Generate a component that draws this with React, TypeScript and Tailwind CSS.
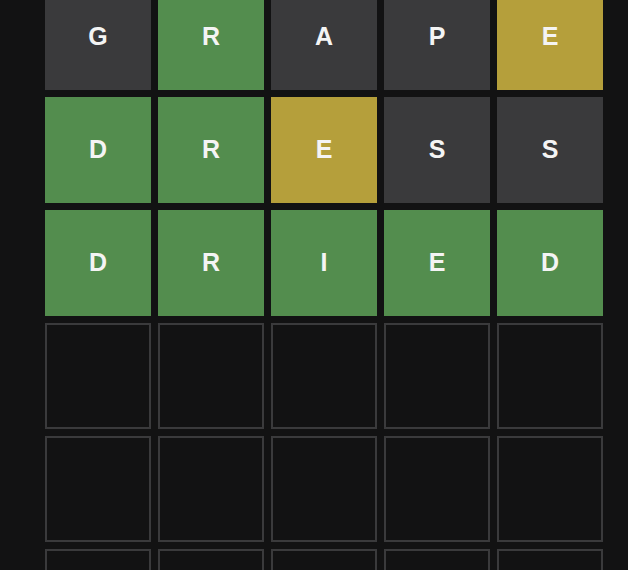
import React from 'react';

type State = 'absent' | 'correct' | 'present' | 'empty';

const rows: { letter: string; state: State }[][] = [
  [
    { letter: 'G', state: 'absent' },
    { letter: 'R', state: 'correct' },
    { letter: 'A', state: 'absent' },
    { letter: 'P', state: 'absent' },
    { letter: 'E', state: 'present' },
  ],
  [
    { letter: 'D', state: 'correct' },
    { letter: 'R', state: 'correct' },
    { letter: 'E', state: 'present' },
    { letter: 'S', state: 'absent' },
    { letter: 'S', state: 'absent' },
  ],
  [
    { letter: 'D', state: 'correct' },
    { letter: 'R', state: 'correct' },
    { letter: 'I', state: 'correct' },
    { letter: 'E', state: 'correct' },
    { letter: 'D', state: 'correct' },
  ],
];

const emptyRow = Array.from({ length: 5 }, () => ({ letter: '', state: 'empty' as State }));
const board = [...rows, emptyRow, emptyRow, emptyRow];

const tileClass: Record<State, string> = {
  absent: 'bg-[#3a3a3c]',
  correct: 'bg-[#538d4e]',
  present: 'bg-[#b59f3b]',
  empty: 'border-2 border-[#3a3a3c] bg-[#121213]',
};

const App = () => {
  return (
    <div className="w-[628px] h-[570px] overflow-hidden bg-[#121213]">
      <div
        className="-mt-[16px] ml-[45px] grid w-[558px] grid-cols-5 gap-[7px]"
        style={{ fontFamily: '"Liberation Sans", Arial, sans-serif' }}
      >
        {board.flatMap((row, r) =>
          row.map((tile, c) => (
            <div
              key={`${r}-${c}`}
              className={`flex h-[106px] items-center justify-center text-[25px] font-bold text-[#f4f4f4] ${tileClass[tile.state]}`}
            >
              {tile.letter}
            </div>
          ))
        )}
      </div>
    </div>
  );
};

export default App;
